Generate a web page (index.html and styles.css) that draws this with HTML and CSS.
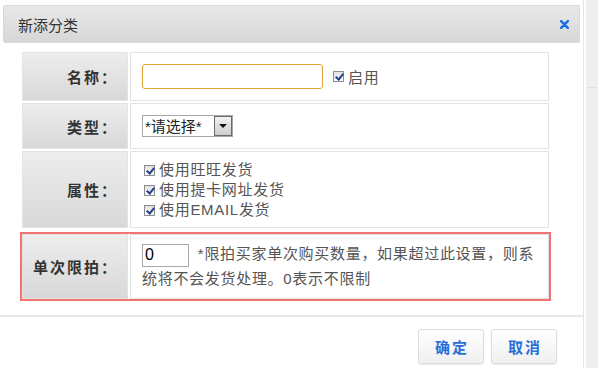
FILE: index.html
```html
<!DOCTYPE html>
<html lang="zh-CN">
<head>
    <meta charset="UTF-8">
    <title>新添分类</title>
    <link rel="stylesheet" href="styles.css">
</head>
<body>
    <div class="page">
        <div class="dialog">
            <div class="dialog-header">
                <span class="dialog-title">新添分类</span>
                <a class="dialog-close" href="#" title="关闭">
                    <svg width="9" height="9" viewBox="0 0 9 9">
                        <path d="M1.2 1.2 L7.8 7.8 M7.8 1.2 L1.2 7.8" stroke="#1d6fe2" stroke-width="2.6" stroke-linecap="round"/>
                    </svg>
                </a>
            </div>

            <div class="dialog-body">
                <div class="form-row">
                    <div class="form-label">名称：</div>
                    <div class="form-field field-inline">
                        <input type="text" class="text-input name-input">
                        <label class="check"><input type="checkbox" checked>启用</label>
                    </div>
                </div>

                <div class="form-row">
                    <div class="form-label">类型：</div>
                    <div class="form-field field-inline">
                        <span class="select-wrap">
                            <select class="select">
                                <option>*请选择*</option>
                            </select>
                            <span class="select-arrow"></span>
                        </span>
                    </div>
                </div>

                <div class="form-row">
                    <div class="form-label">属性：</div>
                    <div class="form-field field-list">
                        <label class="check"><input type="checkbox" checked>使用旺旺发货</label>
                        <label class="check"><input type="checkbox" checked>使用提卡网址发货</label>
                        <label class="check"><input type="checkbox" checked>使用EMAIL发货</label>
                    </div>
                </div>

                <div class="form-row limit">
                    <div class="form-label">单次限拍：</div>
                    <div class="form-field field-text">
                        <input type="text" class="text-input limit-input" value="0">
                        *限拍买家单次购买数量，如果超过此设置，则系统将不会发货处理。0表示不限制
                    </div>
                </div>
            </div>

            <div class="dialog-footer">
                <button class="btn">确定</button>
                <button class="btn">取消</button>
            </div>
        </div>

        <div class="side">
            <div class="side-panel">
                <div class="side-top"></div>
            </div>
        </div>
    </div>
</body>
</html>
```

FILE: styles.css
```css
* {
    margin: 0;
    padding: 0;
    box-sizing: border-box;
}

body {
    font-family: "Liberation Sans", "Noto Sans CJK SC", sans-serif;
    font-size: 15px;
    color: #555;
    background: #fff;
}

.page {
    display: flex;
    height: 368px;
    overflow: hidden;
}

.dialog {
    width: 583px;
    flex-shrink: 0;
    background: #fff;
}

.dialog-header {
    margin: 5px 3px 0;
    height: 38px;
    display: flex;
    align-items: center;
    justify-content: space-between;
    padding: 0 10px 0 14px;
    background: linear-gradient(#e9e9e9, #d7d7d7);
    border: 1px solid #d9d9d9;
    border-radius: 2px;
}

.dialog-title {
    font-family: "Noto Sans CJK SC", sans-serif;
    font-size: 15px;
    color: #333;
}

.dialog-close {
    display: flex;
}

.dialog-body {
    padding: 9px 34px 0 22px;
    display: flex;
    flex-direction: column;
    gap: 2px;
}

.form-row {
    display: flex;
    gap: 2px;
}

.form-label {
    width: 106px;
    flex-shrink: 0;
    display: flex;
    align-items: center;
    justify-content: flex-end;
    padding-right: 9px;
    font-family: "Noto Sans CJK SC", sans-serif;
    font-weight: bold;
    color: #333;
    letter-spacing: 2px;
    background: linear-gradient(#ededed, #d8d8d8);
    border: 1px solid #e4e4e4;
}

.form-field {
    flex: 1;
    border: 1px solid #e2e2e2;
    padding: 11px 8px 11px 11px;
    letter-spacing: 0.7px;
}

.field-inline {
    display: flex;
    align-items: center;
}

.field-list {
    padding: 8px 8px 7px 11px;
    line-height: 20px;
}

.field-list .check {
    display: flex;
    align-items: center;
    padding-left: 2px;
}

.form-row.limit {
    margin-top: 4px;
    outline: 2px solid #f47272;
}

.field-text {
    padding: 7px 8px 7px 11px;
    line-height: 24px;
}

.text-input {
    font-family: "Liberation Sans", sans-serif;
    font-size: 16px;
    color: #000;
    outline: none;
    background: #fff;
}

.name-input {
    width: 181px;
    height: 25px;
    border: 1px solid #e4a43c;
    border-radius: 3px;
}

.limit-input {
    width: 47px;
    height: 23px;
    border: 1px solid #a9a9a9;
    padding-left: 2px;
    margin-right: 4px;
    vertical-align: middle;
}

.check {
    display: inline-flex;
    align-items: center;
    color: #555;
}

.field-inline .check {
    margin-left: 10px;
}

.check input {
    appearance: none;
    width: 11px;
    height: 11px;
    margin-right: 4px;
    border: 1px solid #8e8e8e;
    background: linear-gradient(#e2e2e2, #f9f9f9);
    position: relative;
    flex-shrink: 0;
}

.check input:checked::after {
    content: "";
    position: absolute;
    left: 3px;
    top: 0;
    width: 3px;
    height: 6px;
    border: solid #263d8f;
    border-width: 0 2px 2px 0;
    transform: rotate(40deg);
}

.select-wrap {
    display: inline-flex;
    align-items: stretch;
    height: 22px;
    border: 1px solid #a6a6a6;
    background: #fff;
}

.select {
    appearance: none;
    border: none;
    outline: none;
    background: #fff;
    width: 71px;
    padding-left: 2px;
    font-family: "Liberation Sans", "Noto Sans CJK SC", sans-serif;
    font-size: 15px;
    color: #222;
}

.select-arrow {
    width: 18px;
    display: flex;
    align-items: center;
    justify-content: center;
    border: 1px solid #6a6a6a;
    background: linear-gradient(#f3f3f3, #cdcdcd);
}

.select-arrow::before {
    content: "";
    border-left: 4px solid transparent;
    border-right: 4px solid transparent;
    border-top: 4px solid #111;
}

.dialog-footer {
    margin-top: 16px;
    border-top: 2px solid #e8e8e8;
    padding: 12px 26px 0 0;
    display: flex;
    justify-content: flex-end;
    gap: 7px;
}

.btn {
    width: 66px;
    height: 35px;
    border: 1px solid #dcdcdc;
    border-radius: 3px;
    background: linear-gradient(#fff, #f0f0f0);
    box-shadow: 0 1px 1px rgba(0, 0, 0, 0.08);
    color: #2a6fd6;
    font-family: "Noto Sans CJK SC", sans-serif;
    font-size: 15px;
    font-weight: bold;
    letter-spacing: 2px;
    padding-left: 2px;
    cursor: pointer;
}

.side {
    flex: 1;
    border-left: 1px solid #e6e6e6;
    padding-left: 2px;
}

.side-panel {
    height: 100%;
    background: #efefef;
}

.side-top {
    height: 88px;
    border-bottom: 1px solid #e0e0e0;
}
```
